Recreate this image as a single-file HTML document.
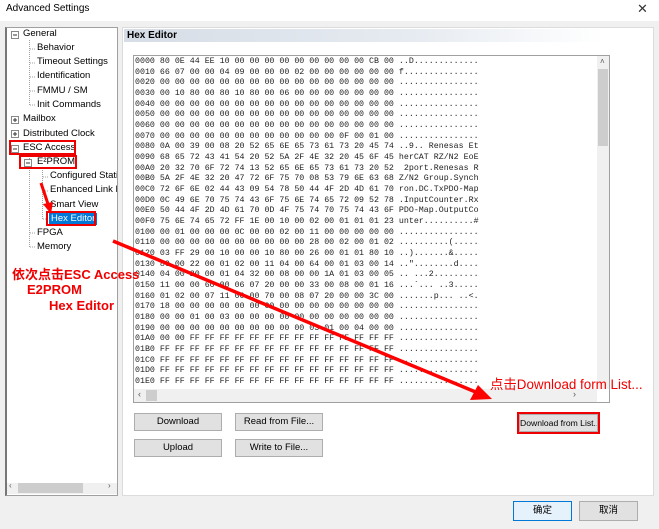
<!DOCTYPE html>
<html><head><meta charset="utf-8"><style>
*{margin:0;padding:0;box-sizing:border-box}
body{width:659px;height:529px;background:#f0f0f0;position:relative;overflow:hidden;font-family:"Liberation Sans","Noto Sans CJK SC",sans-serif;font-size:9.5px;color:#000}
.a{position:absolute}
.title{left:0;top:0;width:659px;height:21px;background:#fff}
.tree{left:5px;top:27px;width:113px;height:469px;background:#fff;border:1px solid #a0a0a0;border-left:2px solid #777}
.ti{position:absolute;white-space:nowrap;font-size:9.5px;line-height:12px}
.panel{left:122px;top:27px;width:532px;height:469px;background:#fff;border:1px solid #dcdcdc}
.hdr{left:124px;top:29px;width:480px;height:13px;background:linear-gradient(90deg,#d6dde6,#e6ebf1 60%,#fff);font-weight:bold;font-size:10px;padding-left:3px;line-height:13px}
.hex{left:133px;top:55px;width:477px;height:348px;border:1px solid #a0a0a0;background:#fff}
pre{position:absolute;left:135px;top:57px;font-family:"Liberation Mono",monospace;font-size:8.3px;line-height:10.67px;color:#222}
.btn{position:absolute;height:18px;background:#e1e1e1;border:1px solid #adadad;text-align:center;line-height:16px;font-size:9.5px;white-space:nowrap}
.red{color:#f00000;position:absolute;white-space:nowrap}
.rb{position:absolute;border:2px solid #e00;}
</style></head><body>
<div class="a title"></div>
<div class="a" style="left:6px;top:3px;font-size:10px">Advanced Settings</div>
<div class="a" style="left:637px;top:1px;font-size:13px;color:#333">✕</div>

<div class="a tree"></div>
<svg class="a" style="left:6px;top:28px" width="110" height="240">
<g stroke="#a0a0a0" stroke-width="1" fill="none" stroke-dasharray="1,1">
<line x1="23.5" y1="12" x2="23.5" y2="78"/><line x1="24" y1="21" x2="30" y2="21"/><line x1="24" y1="35" x2="30" y2="35"/><line x1="24" y1="49" x2="30" y2="49"/><line x1="24" y1="63" x2="30" y2="63"/><line x1="24" y1="77" x2="30" y2="77"/>
<line x1="36.5" y1="140" x2="36.5" y2="191"/><line x1="37" y1="149" x2="43" y2="149"/><line x1="37" y1="163" x2="43" y2="163"/><line x1="37" y1="177" x2="43" y2="177"/><line x1="37" y1="191" x2="43" y2="191"/>
<line x1="23.5" y1="126" x2="23.5" y2="219"/><line x1="24" y1="205" x2="30" y2="205"/><line x1="24" y1="219" x2="30" y2="219"/>
</g>
<g stroke="#888" fill="#fff"><rect x="5.5" y="3.5" width="7" height="7"/><rect x="5.5" y="88.5" width="7" height="7"/><rect x="5.5" y="102.5" width="7" height="7"/><rect x="5.5" y="117.5" width="7" height="7"/><rect x="18.5" y="131.5" width="7" height="7"/></g>
<g stroke="#333"><line x1="7" y1="7" x2="11" y2="7"/><line x1="7" y1="92" x2="11" y2="92"/><line x1="9" y1="90" x2="9" y2="94"/><line x1="7" y1="106" x2="11" y2="106"/><line x1="9" y1="104" x2="9" y2="108"/><line x1="7" y1="121" x2="11" y2="121"/><line x1="20" y1="135" x2="24" y2="135"/></g>
</svg>
<div class="ti" style="left:23px;top:28px">General</div>
<div class="ti" style="left:37px;top:42px">Behavior</div>
<div class="ti" style="left:37px;top:56px">Timeout Settings</div>
<div class="ti" style="left:37px;top:70px">Identification</div>
<div class="ti" style="left:37px;top:85px">FMMU / SM</div>
<div class="ti" style="left:37px;top:99px">Init Commands</div>
<div class="ti" style="left:23px;top:113px">Mailbox</div>
<div class="ti" style="left:23px;top:128px">Distributed Clock</div>
<div class="ti" style="left:23px;top:142px">ESC Access</div>
<div class="ti" style="left:37px;top:156px">E²PROM</div>
<div style="position:absolute;left:50px;top:170px;width:67px;overflow:hidden">
<div class="ti" style="left:0;top:0;position:relative">Configured Stati</div>
<div class="ti" style="left:0;top:2px;position:relative">Enhanced Link D</div></div>
<div class="ti" style="left:50px;top:199px">Smart View</div>
<div class="ti" style="left:49px;top:213px;background:#0078d7;color:#fff;padding:0 2px">Hex Editor</div>
<div class="ti" style="left:37px;top:227px">FPGA</div>
<div class="ti" style="left:37px;top:241px">Memory</div>
<div class="rb" style="left:9px;top:140px;width:67px;height:15px"></div>
<div class="rb" style="left:19px;top:155px;width:58px;height:14px"></div>
<div class="rb" style="left:46px;top:211px;width:50px;height:15px"></div>
<div class="a" style="left:7px;top:483px;width:110px;height:11px;background:#f0f0f0"></div>
<div class="a" style="left:18px;top:483px;width:65px;height:10px;background:#cdcdcd"></div>
<div class="a" style="left:9px;top:481px;font-size:8px;color:#555">‹</div>
<div class="a" style="left:108px;top:481px;font-size:8px;color:#555">›</div>

<div class="a panel"></div>
<div class="a hdr">Hex Editor</div>
<div class="a hex"></div>
<pre>0000 80 0E 44 EE 10 00 00 00 00 00 00 00 00 00 CB 00 ..D.............
0010 66 07 00 00 04 09 00 00 00 02 00 00 00 00 00 00 f...............
0020 00 00 00 00 00 00 00 00 00 00 00 00 00 00 00 00 ................
0030 00 10 80 00 80 10 80 00 06 00 00 00 00 00 00 00 ................
0040 00 00 00 00 00 00 00 00 00 00 00 00 00 00 00 00 ................
0050 00 00 00 00 00 00 00 00 00 00 00 00 00 00 00 00 ................
0060 00 00 00 00 00 00 00 00 00 00 00 00 00 00 00 00 ................
0070 00 00 00 00 00 00 00 00 00 00 00 00 0F 00 01 00 ................
0080 0A 00 39 00 08 20 52 65 6E 65 73 61 73 20 45 74 ..9.. Renesas Et
0090 68 65 72 43 41 54 20 52 5A 2F 4E 32 20 45 6F 45 herCAT RZ/N2 EoE
00A0 20 32 70 6F 72 74 13 52 65 6E 65 73 61 73 20 52  2port.Renesas R
00B0 5A 2F 4E 32 20 47 72 6F 75 70 08 53 79 6E 63 68 Z/N2 Group.Synch
00C0 72 6F 6E 02 44 43 09 54 78 50 44 4F 2D 4D 61 70 ron.DC.TxPDO-Map
00D0 0C 49 6E 70 75 74 43 6F 75 6E 74 65 72 09 52 78 .InputCounter.Rx
00E0 50 44 4F 2D 4D 61 70 0D 4F 75 74 70 75 74 43 6F PDO-Map.OutputCo
00F0 75 6E 74 65 72 FF 1E 00 10 00 02 00 01 01 01 23 unter..........#
0100 00 01 00 00 00 0C 00 00 02 00 11 00 00 00 00 00 ................
0110 00 00 00 00 00 00 00 00 00 00 28 00 02 00 01 02 ..........(.....
0120 03 FF 29 00 10 00 00 10 80 00 26 00 01 01 80 10 ..).......&.....
0130 80 00 22 00 01 02 00 11 04 00 64 00 01 03 00 14 .."........d....
0140 04 00 20 00 01 04 32 00 08 00 00 1A 01 03 00 05 .. ...2.........
0150 11 00 00 60 00 06 07 20 00 00 33 00 08 00 01 16 ...`... ..3.....
0160 01 02 00 07 11 00 00 70 00 08 07 20 00 00 3C 00 .......p... ..<.
0170 18 00 00 00 00 00 00 00 00 00 00 00 00 00 00 00 ................
0180 00 00 01 00 03 00 00 00 00 00 00 00 00 00 00 00 ................
0190 00 00 00 00 00 00 00 00 00 00 03 01 00 04 00 00 ................
01A0 00 00 FF FF FF FF FF FF FF FF FF FF FF FF FF FF ................
01B0 FF FF FF FF FF FF FF FF FF FF FF FF FF FF FF FF ................
01C0 FF FF FF FF FF FF FF FF FF FF FF FF FF FF FF FF ................
01D0 FF FF FF FF FF FF FF FF FF FF FF FF FF FF FF FF ................
01E0 FF FF FF FF FF FF FF FF FF FF FF FF FF FF FF FF ................</pre>
<div class="a" style="left:597px;top:56px;width:12px;height:333px;background:#f0f0f0"></div>
<div class="a" style="left:598px;top:69px;width:10px;height:77px;background:#cdcdcd"></div>
<div class="a" style="left:600px;top:57px;font-size:8px;color:#555">˄</div>
<div class="a" style="left:134px;top:389px;width:463px;height:13px;background:#f0f0f0"></div>
<div class="a" style="left:146px;top:390px;width:11px;height:11px;background:#cdcdcd"></div>
<div class="a" style="left:138px;top:389px;font-size:9px;color:#555">‹</div>
<div class="a" style="left:573px;top:389px;font-size:9px;color:#555">›</div>

<div class="btn" style="left:134px;top:413px;width:88px">Download</div>
<div class="btn" style="left:235px;top:413px;width:88px">Read from File...</div>
<div class="btn" style="left:134px;top:439px;width:88px">Upload</div>
<div class="btn" style="left:235px;top:439px;width:88px">Write to File...</div>
<div class="btn" style="left:519px;top:414px;width:79px;font-size:8.6px;overflow:hidden">Download from List...</div>
<div class="rb" style="left:517px;top:412px;width:83px;height:22px"></div>

<div class="btn" style="left:513px;top:501px;width:59px;height:20px;line-height:18px;border:1px solid #0078d7;background:#e5f1fb">确定</div>
<div class="btn" style="left:579px;top:501px;width:59px;height:20px;line-height:18px">取消</div>

<svg class="a" style="left:0;top:0" width="659" height="529">
<g fill="#f00" stroke="#f00">
<line x1="113" y1="241" x2="478" y2="393" stroke-width="3.5"/>
<polygon points="492,399 470,400 478,385" stroke="none"/>
<line x1="41" y1="183" x2="48" y2="204" stroke-width="3"/>
<polygon points="51,214 43,204 53,202" stroke="none"/>
</g></svg>
<div class="red" style="left:12px;top:264px;font-size:13px;font-weight:bold">依次点击ESC Access</div>
<div class="red" style="left:27px;top:282px;font-size:13px;font-weight:bold">E2PROM</div>
<div class="red" style="left:49px;top:298px;font-size:13px;font-weight:bold">Hex Editor</div>
<div class="red" style="left:490px;top:373px;font-size:13.4px">点击Download form List...</div>
</body></html>
